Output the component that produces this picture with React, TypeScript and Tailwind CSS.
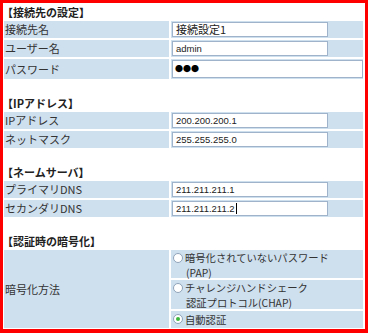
import type { ReactNode } from "react";

const font = { fontFamily: '"Noto Sans CJK JP", "Liberation Sans", sans-serif' };
const latin = { fontFamily: '"Liberation Sans", "Noto Sans CJK JP", sans-serif' };

function Heading({ children }: { children: ReactNode }) {
  return (
    <div className="h-[17px] flex items-center text-[11px] font-bold text-[#222] leading-none -ml-[2px]">
      {children}
    </div>
  );
}

function Field({ value, caret, latinText }: { value: string; caret?: boolean; latinText?: boolean }) {
  return (
    <div className="w-[156px] h-[15px] border border-[#9fb3cb] bg-white flex items-center px-[3px] leading-none text-[#222]">
      <span style={latinText ? latin : undefined} className={latinText ? "text-[9.5px]" : "text-[11px]"}>
        {value}
      </span>
      {caret && <span className="ml-px w-px h-[11px] bg-black" />}
    </div>
  );
}

function Row({ label, children, tall }: { label: string; children: ReactNode; tall?: boolean }) {
  return (
    <div className={`grid grid-cols-[165px_192px] gap-x-[2px] ${tall ? "h-[20px]" : "h-[17px]"}`}>
      <div className="bg-[#cedfee] flex items-center pl-[1px] text-[11px] text-[#333] leading-none">{label}</div>
      <div className="bg-[#cedfee] flex items-center pl-[1px]">{children}</div>
    </div>
  );
}

function Radio({ checked }: { checked?: boolean }) {
  return (
    <div className="w-[10px] h-[10px] shrink-0 rounded-full border border-[#8fa3b9] bg-white flex items-center justify-center">
      {checked && <div className="w-[4px] h-[4px] rounded-full bg-[#3db83d]" />}
    </div>
  );
}

// second line is indented a hair, like the original label block
function Option({ first, second, checked, h }: { first: string; second?: string; checked?: boolean; h: string }) {
  return (
    <div className={`bg-[#cedfee] ${h} flex items-start gap-[2px] pl-[2px] ${second ? "pt-0" : "pt-[1px]"}`}>
      <div className={second ? "pt-[3px]" : "pt-[2px]"}>
        <Radio checked={checked} />
      </div>
      <div className="flex flex-col text-[10.3px] leading-[15px] text-[#333]">
        <span>{first}</span>
        {second && <span className="pl-[1px]">{second}</span>}
      </div>
    </div>
  );
}

export default function App() {
  return (
    <div
      style={font}
      className="w-[368px] h-[333px] bg-white border-[3px] border-b-4 border-[#ff0000] overflow-hidden"
    >
      <div className="pl-[1px] pr-[2px] pt-[1px] flex flex-col">
        <Heading>【接続先の設定】</Heading>
        <div className="flex flex-col gap-[2px]">
          <Row label="接続先名"><Field value="接続設定1" /></Row>
          <Row label="ユーザー名"><Field value="admin" latinText /></Row>
          <Row label="パスワード" tall>
            <div className="w-[191px] h-[18px] border border-[#9fb3cb] bg-white flex items-center px-[2px] text-[8px] leading-none text-black">
              ●●●
            </div>
          </Row>
        </div>

        <div className="mt-[16px]">
          <Heading>【IPアドレス】</Heading>
        </div>
        <div className="flex flex-col gap-[2px]">
          <Row label="IPアドレス"><Field value="200.200.200.1" latinText /></Row>
          <Row label="ネットマスク"><Field value="255.255.255.0" latinText /></Row>
        </div>

        <div className="mt-[16px]">
          <Heading>【ネームサーバ】</Heading>
        </div>
        <div className="flex flex-col gap-[2px]">
          <Row label="プライマリDNS"><Field value="211.211.211.1" latinText /></Row>
          <Row label="セカンダリDNS"><Field value="211.211.211.2" latinText caret /></Row>
        </div>

        <div className="mt-[16px]">
          <Heading>【認証時の暗号化】</Heading>
        </div>
        <div className="grid grid-cols-[165px_192px] gap-x-[2px] h-[78px]">
          <div className="bg-[#cedfee] flex items-center pl-[1px] text-[11px] text-[#333] leading-none">暗号化方法</div>
          <div className="flex flex-col gap-[2px]">
            <Option h="h-[28px]" first="暗号化されていないパスワード" second="(PAP)" />
            <Option h="h-[29px]" first="チャレンジハンドシェーク" second="認証プロトコル(CHAP)" />
            <Option h="h-[17px]" first="自動認証" checked />
          </div>
        </div>
      </div>
    </div>
  );
}
